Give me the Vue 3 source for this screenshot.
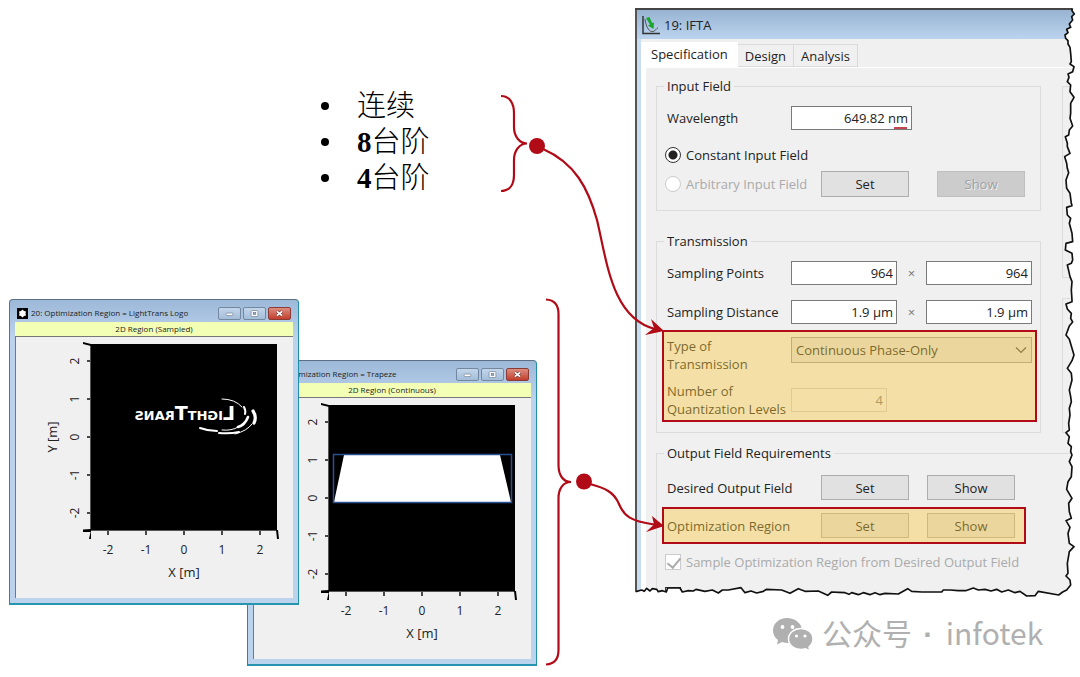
<script setup>
import { ref } from 'vue'

const steps = [
  { count: '', label: '连续' },
  { count: '8', label: '台阶' },
  { count: '4', label: '台阶' },
]

const windows = [
  { id: 'trapeze', title: '21: Optimization Region = Trapeze', caption: '2D Region (Continuous)' },
  { id: 'logo', title: '20: Optimization Region = LightTrans Logo', caption: '2D Region (Sampled)' },
]

const ticks = [-2, -1, 0, 1, 2].map((value) => ({ value, offset: 93 + value * 38 }))

const tabs = ['Specification', 'Design', 'Analysis']
const wavelength = ref('649.82 nm')
const fieldKind = ref('constant')
const pointsX = ref('964')
const pointsY = ref('964')
const distanceX = ref('1.9 μm')
const distanceY = ref('1.9 μm')
const levels = ref('4')
const sampleRegion = ref(true)

// Torn outline of the panel, in thirds of a pixel.
const shift = (points, dx, dy) => points.map(([x, y]) => `${x + dx} ${y + dy}`)
const tearRight = [
  ...shift([[67, 25], [66, 32], [73, 42], [65, 50], [68, 60], [58, 72], [62, 82], [50, 88], [54, 98], [45, 105], [47, 115], [54, 122], [54, 132], [60, 142], [62, 160], [64, 185], [60, 192], [72, 200], [68, 215], [54, 222], [57, 232], [52, 245], [62, 255], [60, 275], [72, 292], [62, 310], [62, 340], [60, 355], [68, 378], [58, 390], [56, 405], [46, 410], [52, 430], [52, 440], [60, 460], [44, 470], [50, 490], [52, 505], [56, 518], [48, 540], [50, 565], [60, 580], [64, 610], [66, 617], [50, 622], [52, 645], [62, 655], [58, 670], [66, 700], [68, 725], [48, 730], [46, 750], [66, 760], [68, 780], [64, 790], [52, 795], [56, 812], [60, 830], [66, 845], [64, 870], [66, 900]], 1245, -24),
  ...shift([[66, 5], [48, 12], [52, 27], [64, 40], [62, 55], [68, 66], [58, 78], [48, 105], [58, 118], [72, 165], [66, 182], [52, 205], [64, 220], [66, 240], [58, 270], [62, 290], [64, 305], [58, 325], [60, 345], [56, 370], [58, 390], [48, 398], [58, 410], [54, 430], [64, 440], [62, 455], [66, 465], [58, 485], [66, 500], [64, 530], [54, 545], [50, 568], [66, 595], [56, 610], [58, 635], [64, 655], [48, 662], [60, 682], [54, 700], [58, 730], [72, 740], [58, 755], [52, 790], [54, 820], [48, 828], [60, 840], [62, 855], [50, 870], [38, 876], [26, 885]], 1245, 876),
]
const tearBottom = shift([[1240, 484], [1230, 497], [1205, 498], [1185, 484], [1170, 488], [1150, 480], [1130, 486], [1115, 478], [1098, 483], [1080, 478], [1060, 480], [1045, 474], [1022, 482], [1000, 482], [975, 480], [955, 480], [950, 486], [890, 486], [860, 484], [848, 476], [820, 492], [780, 490], [765, 494], [750, 488], [735, 494], [715, 488], [700, 494], [680, 488], [672, 493], [660, 488], [640, 487], [620, 486], [608, 496], [580, 483], [540, 484], [520, 476], [495, 490], [470, 480], [425, 478], [415, 484], [395, 489], [378, 483], [360, 488], [348, 473], [310, 480], [292, 480], [280, 489], [262, 480], [240, 484], [213, 478], [205, 483], [190, 482], [172, 486], [165, 474], [128, 474], [124, 486], [112, 482], [100, 485], [95, 478], [82, 476], [75, 483], [65, 475], [58, 484], [50, 480], [32, 485]], -30, 1266)
const tearLine = 'M' + [...tearRight, ...tearBottom].join('L')
const tearOutside = tearLine + 'L-5 1751V1790H1340V-5H1312Z'
</script>

<template>
  <main class="page">
    <section class="left">
      <ul class="steps">
        <li v-for="step in steps" :key="step.count"><b>{{ step.count }}</b>{{ step.label }}</li>
      </ul>

      <article v-for="w in windows" :key="w.id" class="window" :class="w.id">
        <header class="window-bar">
          <svg class="window-icon" viewBox="0 0 11 11" aria-hidden="true">
            <rect width="11" height="11" fill="#000" />
            <path d="M5.500 1.500l1.500 1.500 2 .5-.5 2 .5 2-2 .5-1.500 1.500-1.500-1.500-2-.5.500-2-.5-2 2-.5z" fill="#fff" />
          </svg>
          <h2>{{ w.title }}</h2>
          <div class="window-buttons">
            <button type="button" aria-label="Minimize"><svg viewBox="0 0 22 13"><rect x="7" y="6" width="8" height="3" rx="1" fill="#fff" stroke="#6b7c90" stroke-width=".8" /></svg></button>
            <button type="button" aria-label="Maximize"><svg viewBox="0 0 22 13"><rect x="7" y="3" width="8" height="7" rx="1" fill="#fff" stroke="#6b7c90" stroke-width=".8" /><rect x="9.500" y="5.500" width="3" height="2" fill="#8fa9c6" stroke="#6b7c90" stroke-width=".8" /></svg></button>
            <button type="button" class="close" aria-label="Close"><svg viewBox="0 0 22 13"><path d="M8 4l6 5M14 4l-6 5" stroke="#6b2c26" stroke-width="3.400" /><path d="M8 4l6 5M14 4l-6 5" stroke="#fff" stroke-width="2.200" /></svg></button>
          </div>
        </header>
        <p class="caption">{{ w.caption }}</p>
        <div class="window-body">
          <svg class="plot" viewBox="0 0 277 261" :aria-label="w.caption">
            <g transform="translate(75 7)">
              <rect width="186" height="186" fill="#000" />
              <path d="M-.5 0V186.500M0 186.500H186.500" stroke="#555" />
              <path d="M-8-2L0 0V2L-8 0zM-8 185.500L0 185V188L-8 188zM0 186V195H-2zM185 186H187L188 195H186z" fill="#000" />
              <g v-for="t in ticks" :key="t.value" stroke="#111" stroke-width="1.500">
                <path :d="`M${t.offset} 187v4`" />
                <path :d="`M-1 ${186 - t.offset}h-3`" />
              </g>
              <g v-for="t in ticks" :key="t.value" class="tick">
                <text :x="t.offset" y="210">{{ t.value }}</text>
                <text :transform="`translate(-12 ${186 - t.offset}) rotate(-90)`">{{ t.value }}</text>
              </g>
              <text class="axis" x="93" y="233">X [m]</text>
              <text class="axis" transform="translate(-34 93) rotate(-90)">Y [m]</text>

              <g v-if="w.id === 'logo'">
                <text class="brand" transform="translate(144 76) scale(-1 1)" x="0" y="0">LightTrans</text>
                <g fill="none" stroke="#fff" stroke-linecap="round">
                  <path d="M131 55Q144 55 151 63" stroke-width="1" />
                  <path d="M153 63Q155 67 154 70" stroke-width="2" />
                  <path d="M162 67Q166 73 163 79" stroke-width="3.200" />
                  <path d="M161 80Q156 87 144 90" stroke-width="1" />
                  <path d="M157 73Q154 81 147 83" stroke-width="2.600" />
                  <path d="M147 83Q141 87 131 86" stroke-width="1" />
                  <path d="M109 84Q117 87 126 87" stroke-width="2" />
                  <path d="M128 89Q139 90 148 88" stroke-width="2" />
                </g>
              </g>
              <g v-else>
                <path d="M15 50H171L182 97H5z" fill="#fff" />
                <rect x="4.500" y="49.500" width="178" height="48" fill="none" stroke="#2c4f93" stroke-width="1.500" />
              </g>
            </g>
          </svg>
        </div>
      </article>
    </section>

    <section class="right">
      <form class="panel" @submit.prevent>
        <header class="panel-bar">
          <svg viewBox="0 0 20 20" aria-hidden="true">
            <path d="M2 1V18.500H19" fill="none" stroke="#333" stroke-width="1.500" />
            <path d="M4 4C5 13 9 17.500 12 16.500C15 15.500 15 14 17 12.500" fill="none" stroke="#555" stroke-width="1" />
            <path d="M5 3L8.500 2L11 8L13 7.500L12.500 14L7 10.500L9 9.500z" fill="#18a52c" />
          </svg>
          <h1>19: IFTA</h1>
        </header>
        <nav class="tabs" role="tablist">
          <button v-for="(tab, i) in tabs" :key="tab" type="button" role="tab" :aria-selected="i === 0">{{ tab }}</button>
        </nav>
        <div class="sheet">
          <div class="groups">
            <div>
              <fieldset class="input-field">
                <legend>Input Field</legend>
                <div class="row">
                  <label for="wavelength">Wavelength</label>
                  <span class="wavelength"><input id="wavelength" v-model="wavelength" type="text"></span>
                </div>
                <div class="row option constant">
                  <input id="constant" v-model="fieldKind" type="radio" value="constant">
                  <label for="constant">Constant Input Field</label>
                </div>
                <div class="row option arbitrary">
                  <input id="arbitrary" v-model="fieldKind" type="radio" value="arbitrary" disabled>
                  <label for="arbitrary">Arbitrary Input Field</label>
                  <button type="button">Set</button>
                  <button type="button" disabled>Show</button>
                </div>
              </fieldset>

              <fieldset class="transmission">
                <legend>Transmission</legend>
                <div class="row">
                  <label for="points-x">Sampling Points</label>
                  <input id="points-x" v-model="pointsX" type="text">
                  <span class="times">×</span>
                  <input v-model="pointsY" type="text" aria-label="Sampling Points Y">
                </div>
                <div class="row distance">
                  <label for="distance-x">Sampling Distance</label>
                  <input id="distance-x" v-model="distanceX" type="text">
                  <span class="times">×</span>
                  <input v-model="distanceY" type="text" aria-label="Sampling Distance Y">
                </div>
                <div class="marked type-group">
                  <div class="row tall">
                    <label for="type">Type of<br>Transmission</label>
                    <span class="picker">
                      <select id="type"><option>Continuous Phase-Only</option></select>
                      <svg viewBox="0 0 12 8" aria-hidden="true"><path d="M1 1.500L6 6.500L11 1.500" fill="none" stroke="#444" stroke-width="1.200" /></svg>
                    </span>
                  </div>
                  <div class="row tall quantization">
                    <label for="levels">Number of<br>Quantization Levels</label>
                    <input id="levels" v-model="levels" type="text" disabled>
                  </div>
                </div>
              </fieldset>
            </div>
            <div class="neighbours" aria-hidden="true">
              <div></div>
              <div></div>
            </div>
          </div>

          <fieldset class="output">
            <legend>Output Field Requirements</legend>
            <div class="row actions">
              <span>Desired Output Field</span>
              <button type="button">Set</button>
              <button type="button">Show</button>
            </div>
            <div class="marked region-group">
              <div class="row actions">
                <span>Optimization Region</span>
                <button type="button">Set</button>
                <button type="button">Show</button>
              </div>
            </div>
            <div class="row option sample">
              <input id="sample" v-model="sampleRegion" type="checkbox" disabled>
              <label for="sample">Sample Optimization Region from Desired Output Field</label>
            </div>
            <div class="row option last">
              <input type="checkbox" aria-label="Additional option">
            </div>
          </fieldset>
        </div>
        <svg class="tear" viewBox="0 0 1335 1785" preserveAspectRatio="none" aria-hidden="true">
          <path :d="tearOutside" fill="#fff" />
          <path :d="tearLine" fill="none" stroke="#111" stroke-width="5" stroke-linejoin="round" />
        </svg>
      </form>

      <footer class="watermark">
        <svg viewBox="0 0 42 34" aria-hidden="true">
          <path d="M15 1C7 1 1 6.500 1 13.500C1 17.500 3 21 6 23L5 27.500L10 25C12 25.700 14 26 16 26C24 26 30 20.500 30 13.500C30 6.500 23 1 15 1z" fill="#b0b0b0" />
          <circle cx="10.500" cy="10" r="1.900" fill="#fff" /><circle cx="20.500" cy="10" r="1.900" fill="#fff" />
          <path d="M29 11.500C22 11.500 16.500 16 16.500 22C16.500 28 22 32.500 29 32.500C30.500 32.500 32 32.300 33.500 31.800L38 34L37 30C39.500 28 41 25.200 41 22C41 16 36 11.500 29 11.500z" fill="#b0b0b0" stroke="#fff" stroke-width="1.500" />
          <circle cx="24.500" cy="19" r="1.600" fill="#fff" /><circle cx="33" cy="19" r="1.600" fill="#fff" />
        </svg>
        <span>公众号<i> · </i>infotek</span>
      </footer>
    </section>

    <svg class="connectors" width="1080" height="677" viewBox="0 0 1080 677" aria-hidden="true">
      <g fill="none" stroke="#b00b17" stroke-width="2.200">
        <path d="M501 96C510 96 514 104 514 113V127C514 137 520 143.500 527 143.500C520 143.500 514 150 514 160V175C514 184 510 191 501 191" />
        <path d="M543 149C575 163 588 188 597 220C607 262 612 318 655 329" />
        <path d="M546 299.500C555 300 558.500 306 558.500 314V465C558.500 475 563 482 571 482C563 482 558.500 489 558.500 498V650C558.500 658 555 664 546 664.500" />
        <path d="M590 484C605 488 614 492 619 504C624 516 630 521 654 524.500" />
      </g>
      <g fill="#b00b17">
        <circle cx="537" cy="146" r="8" />
        <circle cx="584" cy="481.500" r="8" />
        <path d="M664 331L651 319L654 328L645 335z" />
        <path d="M664 526L652 516L654 524.500L646 532z" />
      </g>
    </svg>
  </main>
</template>

<style>
body {
  background: #fff;
}
</style>

<style scoped>
* {
  box-sizing: border-box;
}

.page {
  position: relative;
  display: grid;
  grid-template-columns: 635px minmax(445px, 1fr);
  min-height: 100vh;
  overflow: hidden;
  background: #fff;
  color: #222;
  font: 500 13px/18px "Open Sans", "Noto Sans", sans-serif;
}

.left {
  position: relative;
}

.steps {
  margin: 88px 0 0 325px;
  padding: 0;
  list-style: none;
  color: #000;
  font: 29px/36px "Liberation Serif", "Noto Sans CJK SC", serif;
}

.steps li {
  display: flex;
  align-items: center;
  font-weight: 300;
}

.steps b {
  font-weight: 700;
}

.steps li::before {
  content: "";
  width: 8px;
  height: 8px;
  margin: 0 28px 0 -4px;
  border-radius: 50%;
  background: #000;
}

/* Floating plot windows */
.window {
  position: absolute;
  width: 290px;
  padding: 0 5px 5px;
  border: 1px solid #5c7184;
  border-right-color: #1f8fa6;
  border-bottom: 2px solid #2795ad;
  border-radius: 4px 4px 0 0;
  background: linear-gradient(#9db9d8, #bcd3ee 40px);
}

.window.logo {
  left: 9px;
  top: 299px;
}

.window.trapeze {
  left: 247px;
  top: 360px;
}

.window-bar {
  display: flex;
  align-items: center;
  height: 22px;
  padding: 4px 2px 0;
}

.window-icon {
  width: 11px;
  height: 11px;
}

.window-bar h2 {
  flex: 1;
  margin: 0 0 0 3px;
  font-size: 8px;
  font-weight: 500;
  line-height: 12px;
  white-space: nowrap;
}

.window-buttons {
  display: flex;
  gap: 2px;
}

.window-buttons button {
  display: block;
  width: 23px;
  height: 13px;
  padding: 0;
  border: 1px solid #73889f;
  border-radius: 2px;
  background: linear-gradient(#c3d6eb, #a3bdd9);
}

.window-buttons button.close {
  border-color: #8b3b35;
  background: linear-gradient(#dc8d80, #c23f2c);
}

.window-buttons svg {
  display: block;
  width: 100%;
  height: 100%;
}

.caption {
  margin: 0;
  background: #f2ffb5;
  font-size: 8px;
  line-height: 14px;
  text-align: center;
}

.window-body {
  border-top: 1px solid #777;
  border-left: 1px solid #777;
  background: #f0f0f0;
}

.plot {
  display: block;
  width: 100%;
}

.tick text,
.axis {
  fill: #222;
  font-size: 12px;
  text-anchor: middle;
}

.axis {
  font-size: 13px;
}

.brand {
  fill: #fff;
  font: bold 19px "DejaVu Sans", sans-serif;
  font-variant: small-caps;
}

/* IFTA dialog */
.panel {
  position: relative;
  height: 595px;
  margin-top: 8px;
  padding: 2px 0 0 6px;
  overflow: hidden;
  background:
    linear-gradient(#444 2px, transparent 2px),
    linear-gradient(90deg, #555 2px, #c9dcf0 2px);
}

.panel-bar {
  display: flex;
  align-items: center;
  gap: 3px;
  height: 29px;
  margin-left: -4px;
  padding-left: 4px;
  background: linear-gradient(#98b4d2, #bbd3ee);
}

.panel-bar svg {
  width: 20px;
  height: 20px;
}

.panel-bar h1 {
  margin: 0;
  font-size: 13px;
  font-weight: 500;
}

.tabs {
  display: flex;
  align-items: flex-end;
  height: 28px;
  background: #f0f0f0;
}

.tabs button {
  height: 23px;
  padding: 0 7px;
  border: 1px solid #dadada;
  border-left: 0;
  background: #f0f0f0;
}

.tabs button[aria-selected="true"] {
  height: 25px;
  padding: 0 10px 2px;
  border: 0;
  background: #fff;
}

.sheet {
  padding: 9px 0 0 10px;
  border-top: 1px solid #fff;
  border-left: 5px solid #fff;
  background: #f0f0f0;
}

.groups {
  display: grid;
  grid-template-columns: 385px 1fr;
  gap: 21px;
}

fieldset {
  min-width: 0;
  margin: 0;
  padding: 11px 8px 13px 10px;
  border: 1px solid #dcdcdc;
}

legend {
  margin-left: -3px;
  padding: 0 3px;
}

.transmission {
  margin-top: 21px;
  padding-bottom: 10px;
}

.output {
  margin-top: 11px;
  padding-top: 13px;
  border-bottom: 0;
}

.neighbours > div {
  height: 192px;
  margin-top: 9px;
  border: 1px solid #dcdcdc;
  border-right: 0;
}

.neighbours > div + div {
  height: 135px;
  margin-top: 20px;
}

.row {
  display: flex;
  align-items: center;
  white-space: nowrap;
}

.row > label:first-child {
  flex: 0 0 124px;
}

button,
input,
select {
  margin: 0;
  color: #222;
  font: inherit;
}

input[type="text"] {
  width: 106px;
  height: 24px;
  padding: 0 3px;
  border: 1px solid #7a7a7a;
  border-radius: 0;
  background: #fff;
  text-align: right;
}

input[type="text"]:disabled {
  width: 96px;
  border-color: #ccc;
  background: #f0f0f0;
  color: #777;
}

.wavelength {
  position: relative;
}

.wavelength input {
  display: block;
  width: 121px;
}

.wavelength::after {
  content: "";
  position: absolute;
  right: 5px;
  bottom: 1px;
  width: 13px;
  height: 2px;
  background: #c2454f;
}

.row button {
  width: 88px;
  height: 26px;
  padding: 0;
  border: 1px solid #adadad;
  background: #e1e1e1;
}

.row button:disabled {
  border-color: #bfbfbf;
  background: #ccc;
  color: #a0a0a0;
  text-shadow: 1px 1px #eee;
}

.option input {
  flex: none;
  appearance: none;
  width: 16px;
  height: 16px;
  margin-left: -2px;
  border: 1px solid #333;
  background: #fff;
}

.option input[type="radio"] {
  border-radius: 50%;
}

.option input[type="radio"]:checked {
  background: radial-gradient(circle, #222 4px, #fff 5px);
}

.option input:disabled {
  border-color: #ccc;
}

.option label {
  margin-left: 5px;
}

.option input:disabled + label {
  color: #aaa;
}

.option.constant {
  height: 18px;
  margin-top: 16px;
}

.option.arbitrary {
  margin-top: 7px;
}

.arbitrary label {
  flex: 0 0 135px;
}

.arbitrary button + button {
  margin-left: 28px;
}

.times {
  width: 29px;
  color: #777;
  text-align: center;
}

.distance {
  margin-top: 15px;
}

.marked {
  position: relative;
}

.marked::after {
  content: "";
  position: absolute;
  inset: 0;
  border: 2px solid #b00b17;
  background: rgba(250, 202, 64, 0.42);
  background-clip: padding-box;
  pointer-events: none;
}

.type-group {
  margin: 6px -5px 0;
  padding: 7px 5px 4px;
}

.tall {
  height: 36px;
}

.quantization {
  margin-top: 9px;
}

.picker {
  position: relative;
  flex: 0 0 241px;
  align-self: flex-start;
}

.picker select {
  display: block;
  width: 100%;
  height: 26px;
  padding: 0 4px;
  appearance: none;
  border: 1px solid #999;
  border-radius: 0;
  background: #e1e1e1;
}

.picker svg {
  position: absolute;
  right: 5px;
  top: 9px;
  width: 12px;
  height: 8px;
}

.actions span {
  flex: 0 0 154px;
}

.actions button {
  height: 25px;
}

.actions button + button {
  margin-left: 18px;
}

.region-group {
  width: 364px;
  margin: 7px 0 0 -5px;
  padding: 6px 5px;
}

.sample {
  height: 18px;
  margin-top: 9px;
}

.sample input {
  position: relative;
}

.sample input:checked::after {
  content: "";
  position: absolute;
  left: 4px;
  top: 0;
  width: 6px;
  height: 11px;
  border: solid #aaa;
  border-width: 0 2px 2px 0;
  transform: rotate(40deg);
}

.last {
  margin-top: 16px;
}

.tear {
  position: absolute;
  inset: 0;
  width: 100%;
  height: 100%;
  pointer-events: none;
}

.watermark {
  display: flex;
  align-items: center;
  gap: 8px;
  margin: 8px 0 0 137px;
  color: #b0b0b0;
  font: 30px/42px "Noto Sans CJK SC", sans-serif;
  white-space: nowrap;
}

.watermark svg {
  width: 42px;
  height: 34px;
}

.watermark i {
  padding: 0 4px 0 3px;
  font-family: "Liberation Sans", sans-serif;
  font-style: normal;
  font-weight: 700;
  white-space: pre;
}

.connectors {
  position: absolute;
  left: 0;
  top: 0;
  pointer-events: none;
}
</style>
